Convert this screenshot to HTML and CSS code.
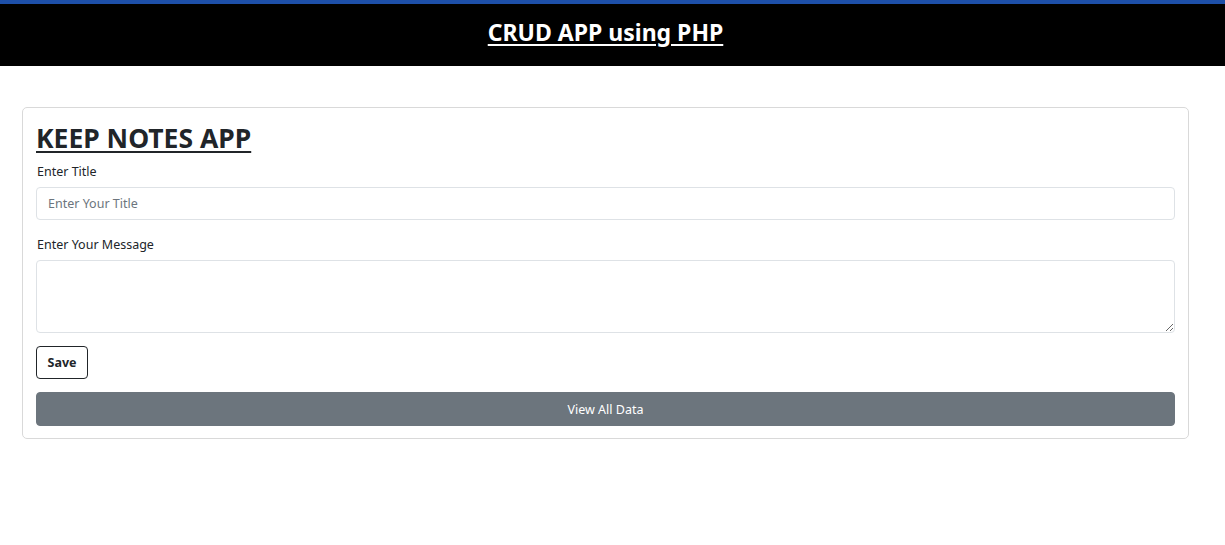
FILE: index.html
```html
<!DOCTYPE html>
<html lang="en">
<head>
<meta charset="utf-8">
<title>CRUD APP using PHP</title>
<link rel="stylesheet" href="styles.css">
</head>
<body>
  <header class="topbar">
    <h1 class="app-title">CRUD APP using PHP</h1>
  </header>
  <main class="container">
    <section class="card">
      <h3 class="card-title">KEEP NOTES APP</h3>
      <form class="note-form">
        <div class="field field-title">
          <label class="label" for="title">Enter Title</label>
          <input class="control" id="title" type="text" placeholder="Enter Your Title">
        </div>
        <div class="field field-msg">
          <label class="label" for="msg">Enter Your Message</label>
          <textarea class="control area" id="msg"></textarea>
        </div>
        <div class="actions">
          <button class="btn-save" type="button">Save</button>
        </div>
        <button class="btn-view" type="button">View All Data</button>
      </form>
    </section>
  </main>
</body>
</html>
```

FILE: styles.css
```css
* { box-sizing: border-box; }
html, body { margin: 0; padding: 0; }
body {
  font-family: "Noto Sans", "Open Sans", sans-serif;
  color: #212529;
  background: #fff;
}
.topbar {
  background: #000;
  border-top: 4px solid #1d4fa8;
  height: 66px;
  display: flex;
  align-items: center;
  justify-content: center;
  padding-right: 14px;
}
.app-title {
  margin: 0;
  color: #fff;
  font-size: 23px;
  font-weight: 700;
  text-decoration: underline;
  text-decoration-thickness: 2px;
  text-underline-offset: 3px;
  line-height: 1;
  padding-bottom: 6px;
}
.container {
  padding: 41px 36px 0 22px;
}
.card {
  border: 1px solid #d9d9d9;
  border-radius: 5px;
  padding: 14px 13px 12px 13px;
}
.card-title {
  margin: 0 0 9px 0;
  font-size: 26.5px;
  font-weight: 700;
  line-height: 32px;
  text-decoration: underline;
  text-decoration-thickness: 2px;
  text-underline-offset: 3px;
}
.note-form {
  display: flex;
  flex-direction: column;
}
.field {
  display: flex;
  flex-direction: column;
}
.field-title { margin-bottom: 16px; }
.field-msg { margin-bottom: 13px; }
.label {
  font-size: 12.5px;
  line-height: 17px;
  margin: 0 0 7px 1px;
}
.control {
  font-family: inherit;
  font-size: 12.5px;
  color: #212529;
  border: 1px solid #dee2e6;
  border-radius: 4px;
  height: 33px;
  padding: 0 11px;
  outline: none;
  background: #fff;
}
.control::placeholder { color: #6c757d; }
.area {
  height: 73px;
  padding: 6px 11px;
  resize: vertical;
}
.actions { margin-bottom: 13px; }
.btn-save {
  font-family: inherit;
  font-size: 12.5px;
  font-weight: 700;
  color: #212529;
  background: #fff;
  border: 1px solid #212529;
  border-radius: 4px;
  height: 33px;
  width: 52px;
  padding: 0;
  cursor: pointer;
}
.btn-view {
  font-family: inherit;
  font-size: 12.5px;
  color: #fff;
  background: #6c757d;
  border: 1px solid #6c757d;
  border-radius: 4px;
  height: 34px;
  width: 100%;
  cursor: pointer;
}
```
